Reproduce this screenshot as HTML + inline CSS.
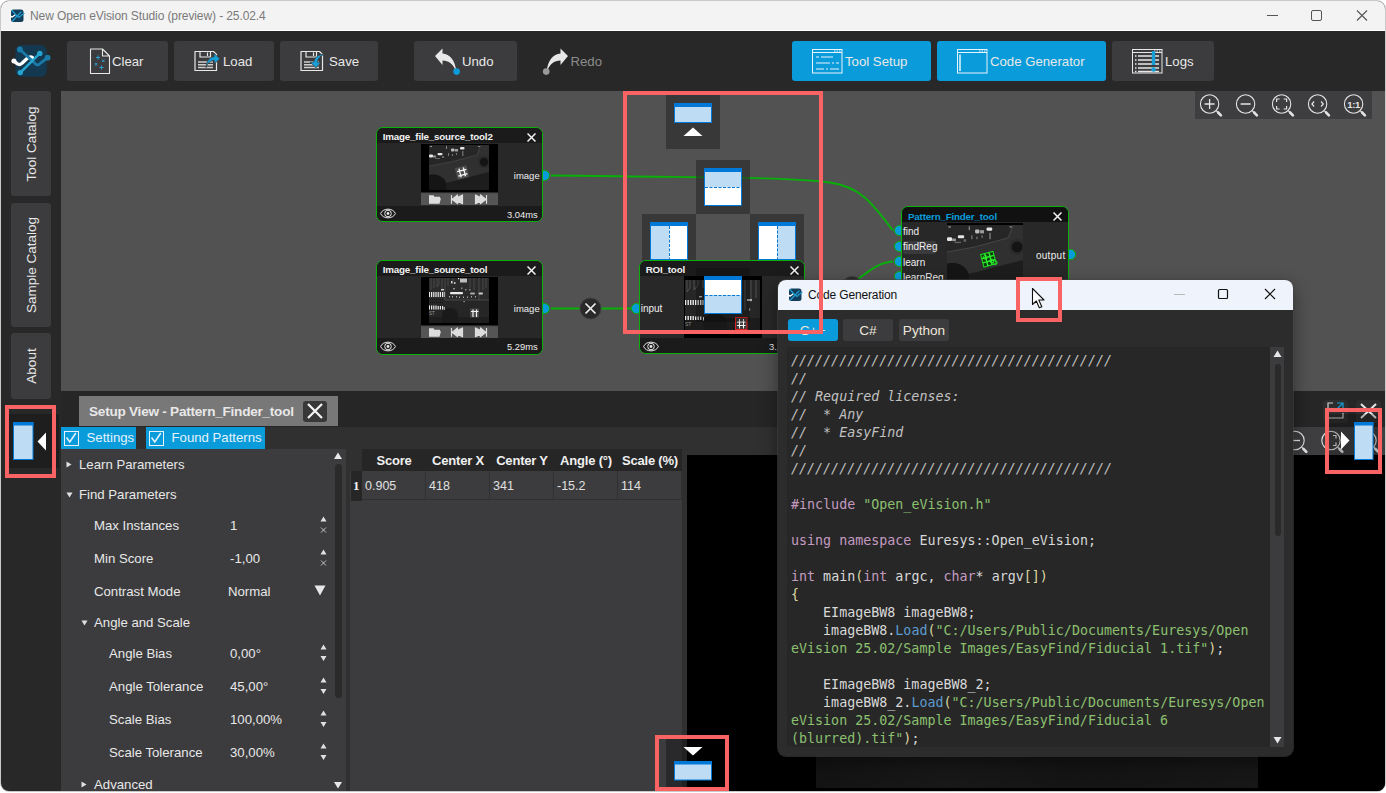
<!DOCTYPE html>
<html lang="en">
<head>
<meta charset="utf-8">
<title>New Open eVision Studio (preview) - 25.02.4</title>
<style>
*{box-sizing:border-box;margin:0;padding:0}
html,body{width:1386px;height:793px;overflow:hidden;background:#fff}
body{font-family:"Liberation Sans",sans-serif;font-size:13px;color:#e6e6e6;position:relative}
.abs,.abs>*{position:absolute}
#win{position:absolute;left:0;top:0;width:1386px;height:792px;border-radius:9px;background:#c9c9c9;overflow:hidden}
#winin{position:absolute;left:1px;top:1px;width:1384px;height:790px;border-radius:8px;background:#282828;overflow:hidden}
#titlebar{position:absolute;left:0;top:0;width:1384px;height:30px;background:#f3f3f3;border-bottom:1px solid #fff}
#title{position:absolute;left:29px;top:8px;font-size:12px;color:#7a7a7a;white-space:nowrap;letter-spacing:-0.1px}
.tbtn{position:absolute;top:40px;height:40px;background:#3c3c3e;border-radius:3px}
.tbtn.on{background:#0a9cda}
.tbtn span,.tlabel{position:absolute;top:13px;font-size:13.2px;color:#e8e8e8;white-space:nowrap}
.vtab{position:absolute;left:10px;width:40px;background:#3c3c3e;border-radius:3px}
.vtab span{position:absolute;left:50%;top:50%;transform:translate(-50%,-50%) rotate(-90deg);white-space:nowrap;font-size:13.5px;color:#e8e8e8}
#canvas{position:absolute;left:60px;top:90px;width:1324px;height:300px;background:#525252;overflow:hidden}
.red{position:absolute;border:4px solid #f96363;z-index:50}

#pg{position:absolute;left:-1px;top:-1px;width:1386px;height:793px}
#pg div,#pg svg{position:absolute}
.node{border:1.5px solid #08b008;border-radius:7px;background:#282828;overflow:hidden}
.node .nt{left:0;top:0;right:0;height:15.3px;background:#1b1b1b}
.node .nt b{position:absolute;left:6px;top:3.4px;font-size:9.8px;letter-spacing:-0.19px;color:#f2f2f2;white-space:nowrap}
.node .nf{left:0;bottom:0;right:0;height:15.5px;background:#1b1b1b}
.node .ms{right:4.5px;bottom:1.5px;font-size:9.4px;color:#eee;letter-spacing:0;white-space:nowrap}
.plabel{font-size:10px;color:#eee;letter-spacing:0;white-space:nowrap;line-height:13px}
.port{width:11px;height:11px;border-radius:50%;background:#0a9cda;border:1.2px solid #08b008}
.guide{background:#3d3d3d}

.bt{font-size:13.2px;color:#e8e8e8;white-space:nowrap;line-height:16px}
.chip{background:#0a9cda;height:22px}
.chip .cb{left:2.500px;top:3.700px;width:15px;height:15px;border:1.600px solid #e8f3fa}
.th{font-weight:bold;font-size:13px;color:#f0f0f0;text-align:center;line-height:23px;height:22px;top:449px;width:64px;background:#262626;white-space:nowrap;letter-spacing:-0.2px}
.td{font-size:12.500px;color:#e0e0e0;line-height:30.5px;height:29px;top:471px;width:64px;padding-left:3px;border-right:1px solid #303032;border-bottom:1px solid #303032}
.spin{font-size:7px;color:#e0e0e0;line-height:8px;width:10px;text-align:center}

#dlgbox{left:778px;top:280px;width:515px;height:476px;border-radius:8px;background:#2c2c2c;overflow:hidden;box-shadow:0 0 0 1px rgba(70,70,70,0.55),0 6px 18px rgba(0,0,0,0.45)}
#dlgbox .dt{left:0;top:0;width:515px;height:30px;background:#eff3fb}
.ltab{top:39px;width:50px;height:22px;border-radius:3px;background:#3c3c3e;text-align:center;font-size:13.600px;line-height:23px;color:#ece6da}
#code{left:13px;top:72px;font-family:"DejaVu Sans Mono","Liberation Mono",monospace;font-size:13.330px;line-height:18px;color:#d8d8d8;white-space:pre}
#code i{color:#c0c0c0;font-style:italic}
#code .k{color:#c49ac0}#code .s{color:#8cc070}#code .f{color:#5c9cd0}#code .p{color:#c49ac0}#code .y{color:#dcd6a0}
</style>
</head>
<body>
<div id="win"><div id="winin">

<!-- ===== title bar ===== -->
<div id="titlebar">
  <svg style="position:absolute;left:8px;top:8px" width="16" height="14" viewBox="0 0 16 14">
    <rect x="2" y="0.5" width="12.5" height="12.5" rx="2.5" fill="#123e5c"/>
    <path d="M0.8 6.2 L3 8.2 L6 6" stroke="#fff" stroke-width="1.3" fill="none" stroke-linecap="round"/>
    <path d="M3 1.5 L7.5 6.5 L10 8.5 L12 6.5 L15 4.5" stroke="#1f9ccf" stroke-width="1.2" fill="none" stroke-linecap="round"/>
    <path d="M3.5 12 L12 3" stroke="#1f9ccf" stroke-width="1.2" fill="none" stroke-linecap="round"/>
  </svg>
  <div id="title">New Open eVision Studio (preview) - 25.02.4</div>
  <svg style="position:absolute;left:1260px;top:6.5px" width="116" height="16" viewBox="0 0 116 16">
    <path d="M6 7.5 H17" stroke="#555" stroke-width="1"/>
    <rect x="50.5" y="2.5" width="10" height="10" rx="1.5" fill="none" stroke="#555" stroke-width="1"/>
    <path d="M96 2.5 L106 12.5 M106 2.5 L96 12.5" stroke="#555" stroke-width="1.1"/>
  </svg>
</div>

<!-- ===== toolbar ===== -->
<div id="toolbar">
  <!-- logo -->
  <svg style="position:absolute;left:9px;top:39px" width="42" height="40" viewBox="10 40 42 40">
    <rect x="15.400" y="45" width="31.400" height="31.800" rx="6" fill="#14384f"/>
    <path d="M13.900 60.900 L17.500 64 C19 65 20.500 64.500 22 63.300 L26.500 59 C28.500 57 30.500 56.500 32.500 57.500" stroke="#fff" stroke-width="3.300" fill="none" stroke-linecap="round" stroke-linejoin="round"/>
    <circle cx="13.900" cy="60.900" r="2.500" fill="#fff"/>
    <path d="M19.900 49.500 L32 60.500 C35 63.500 37 66.500 39.500 64 L47.600 57.700" stroke="#1a7aa8" stroke-width="2.800" fill="none" stroke-linecap="round" stroke-linejoin="round"/>
    <circle cx="19.900" cy="49.500" r="2.900" fill="#1a7aa8"/><circle cx="47.600" cy="57.700" r="2.900" fill="#1a7aa8"/>
    <path d="M20.300 72.600 L39.800 53.400" stroke="#25a4d0" stroke-width="2.600" fill="none" stroke-linecap="round"/>
    <circle cx="20.300" cy="72.600" r="2.700" fill="#25a4d0"/><circle cx="39.800" cy="53.400" r="2.700" fill="#25a4d0"/>
  </svg>

  <div class="tbtn" style="left:66px;width:101px">
    <svg style="position:absolute;left:22px;top:7px" width="22" height="27" viewBox="0 0 22 27">
      <path d="M1.5 1 H13.5 L20.5 8 V25.5 H1.5 Z M13.5 1 V8 H20.5" fill="none" stroke="#e8e8e8" stroke-width="1.1" stroke-linejoin="round"/>
      <g stroke="#2a9fd0" stroke-width="1" fill="none"><path d="M9 7.5v4M7 9.500h4"/><path d="M13 11.500l2.500 2.500M15.500 11.500l-2.500 2.500"/><path d="M6 15l2 2.500M8 15l-2 2.500"/><path d="M12.500 17.500v4M10.500 19.500h4"/></g>
    </svg>
    <span style="left:45px">Clear</span>
  </div>
  <div class="tbtn" style="left:173px;width:100px">
    <svg style="position:absolute;left:20px;top:9px" width="26" height="22" viewBox="0 0 26 22" id="flop1">
      <path d="M1 1.500 H19.500 L22.500 4.500 V20.500 H1 Z" fill="none" stroke="#e8e8e8" stroke-width="1.200" stroke-linejoin="round"/>
      <path d="M6 1.500 V7 H16.500 V1.500 M13.500 2.500 V6" fill="none" stroke="#e8e8e8" stroke-width="1.200"/>
      <path d="M4 12 H19 M4 14.700 H19 M4 17.400 H19" stroke="#cfcfcf" stroke-width="1.500"/>
      <path d="M12 17.800 C12.300 11 15.500 7.200 20 6.800 V3.200 L25.900 8.800 L20.300 13.900 V10.600 C16.500 10.600 13.800 12.600 12 17.800 Z" fill="#169fd6" stroke="#3c3c3e" stroke-width="0.700"/>
    </svg>
    <span style="left:49px">Load</span>
  </div>
  <div class="tbtn" style="left:279px;width:98px">
    <svg style="position:absolute;left:20px;top:9px" width="26" height="22" viewBox="0 0 26 22">
      <path d="M1 1.500 H19.500 L22.500 4.500 V20.500 H1 Z" fill="none" stroke="#e8e8e8" stroke-width="1.200" stroke-linejoin="round"/>
      <path d="M6 1.500 V7 H16.500 V1.500 M13.500 2.500 V6" fill="none" stroke="#e8e8e8" stroke-width="1.200"/>
      <path d="M4 12 H19 M4 14.700 H19 M4 17.400 H19" stroke="#cfcfcf" stroke-width="1.500"/>
      <path d="M25.500 4 C19 4 14.500 7 13.800 12 H10 L16 17.800 L21 12.300 H17.500 C17.800 8.500 20.500 5.500 25.500 4 Z" fill="#169fd6" stroke="#3c3c3e" stroke-width="0.700"/>
    </svg>
    <span style="left:49px">Save</span>
  </div>
  <div class="tbtn" style="left:413px;width:103px">
    <svg style="position:absolute;left:19px;top:5px" width="28" height="32" viewBox="0 0 28 32">
      <path d="M2 10 L9.500 2.500 V7.500 C17 8 22 14 23.500 26 C20 18 16 14.500 9.500 14.500 V19 Z" fill="#e8e8e8"/>
      <circle cx="23.600" cy="25.600" r="3.300" fill="#0a9cda"/>
    </svg>
    <span style="left:48px">Undo</span>
  </div>
  <svg style="position:absolute;left:540px;top:45px" width="30" height="32" viewBox="0 0 30 32">
    <path d="M27 10 L19.500 2.500 V7.500 C12 8 7 14 5.500 26 C9 18 13 14.500 19.500 14.500 V19 Z" fill="#e8e8e8"/>
    <circle cx="5.200" cy="25.600" r="3.300" fill="#9a9a9a"/>
  </svg>
  <div class="tlabel" style="left:569.500px;top:53px;color:#8c8c8c">Redo</div>

  <div class="tbtn on" style="left:791px;width:139px">
    <svg style="position:absolute;left:20px;top:8px" width="31" height="25" viewBox="0 0 31 25">
      <rect x="0.500" y="0.500" width="29.500" height="23.500" fill="none" stroke="#e8f4fb" stroke-width="1"/>
      <path d="M0.500 3.500 H30" stroke="#e8f4fb" stroke-width="1"/>
      <path d="M22 2h1.500M24.500 2h1.500M27 2h1.500" stroke="#e8f4fb" stroke-width="1"/>
      <path d="M4 8h3M9 8h12M4 14h14M20 14h2M24 14h3M4 20h8M14 20h2M18 20h9" stroke="#e8f4fb" stroke-width="1.200"/>
    </svg>
    <span style="left:53px">Tool Setup</span>
  </div>
  <div class="tbtn on" style="left:936px;width:169px">
    <svg style="position:absolute;left:20px;top:8px" width="31" height="25" viewBox="0 0 31 25">
      <rect x="0.500" y="0.500" width="29.500" height="23.500" fill="none" stroke="#e8f4fb" stroke-width="1"/>
      <path d="M0.500 3.500 H30" stroke="#e8f4fb" stroke-width="1"/>
      <path d="M22 2h1.500M24.500 2h1.500M27 2h1.500" stroke="#e8f4fb" stroke-width="1"/>
      <path d="M3 5.500 V22" stroke="#e8f4fb" stroke-width="1.500"/>
    </svg>
    <span style="left:53px">Code Generator</span>
  </div>
  <div class="tbtn" style="left:1111px;width:102px">
    <svg style="position:absolute;left:20px;top:8px" width="31" height="25" viewBox="0 0 31 25">
      <rect x="0.500" y="0.500" width="29.500" height="23.500" fill="none" stroke="#e8e8e8" stroke-width="1"/>
      <path d="M0.500 3.500 H30" stroke="#e8e8e8" stroke-width="1"/>
      <path d="M22 2h1.500M24.500 2h1.500M27 2h1.500" stroke="#e8e8e8" stroke-width="1"/>
      <path d="M3 7h1.500M6 7h21M3 11h1.500M6 11h21M3 15h1.500M6 15h21M3 19h1.500M6 19h21M3 22.500h1.500M6 22.500h21" stroke="#e8e8e8" stroke-width="1.500"/>
      <path d="M21.500 2 V16" stroke="#169fd6" stroke-width="3.400"/><circle cx="21.500" cy="20.500" r="2.300" fill="#169fd6"/>
    </svg>
    <span style="left:53px">Logs</span>
  </div>
</div>

<!-- ===== left vertical tabs ===== -->
<div class="vtab" style="top:90px;height:105px"><span>Tool Catalog</span></div>
<div class="vtab" style="top:202px;height:124px"><span>Sample Catalog</span></div>
<div class="vtab" style="top:332px;height:66px"><span>About</span></div>

<!-- ===== graph canvas ===== -->
<div id="canvas"></div>
<div id="pg">
<!--CANVAS-->
<div class="port" style="left:539.300px;top:170px"></div><div class="port" style="left:539.300px;top:303px"></div><div class="port" style="left:630.500px;top:303px"></div><div class="port" style="left:894px;top:225px"></div><div class="port" style="left:894px;top:240.500px"></div><div class="port" style="left:894px;top:256px"></div><div class="port" style="left:894px;top:271px"></div><div class="port" style="left:1064.500px;top:249px"></div><svg style="left:61px;top:91px" width="1325" height="300" viewBox="61 91 1325 300"><g fill="none" stroke="#08b008" stroke-width="1.900">
<path d="M551 175.500 L620 176.300 C700 177.500 790 177 830 182.500 C862 187 874 206 893 230.500"/>
<path d="M551 308.500 H631"/>
<path d="M806 300 C830 300 845 290 857 280 C870 270 880 262 893 261.500"/>
</g>
<circle cx="590.500" cy="308.500" r="10.500" fill="#2a2a2a" stroke="#3e3e3e" stroke-width="1"/><path d="M585.500 303.500 l10 10 m0 -10 l-10 10" stroke="#f0f0f0" stroke-width="1.700"/>
<circle cx="852" cy="287" r="10.500" fill="#2a2a2a" stroke="#3e3e3e" stroke-width="1"/><path d="M847 282 l10 10 m0 -10 l-10 10" stroke="#f0f0f0" stroke-width="1.700"/>
</svg><div class="node" style="left:375.7px;top:127px;width:167.500px;height:95px"><div class="nt"><b>Image_file_source_tool2</b></div><svg style="left:150px;top:5px" width="9" height="9" viewBox="0 0 9 9"><path d="M0.5 0.5 L8.5 8.5 M8.5 0.5 L0.5 8.5" stroke="#f2f2f2" stroke-width="1.5"/></svg><div style="left:44px;top:15.900px;width:77px;height:48.300px;background:#000"></div><svg style="left:52px;top:17.200px" width="60" height="45" viewBox="0 0 60 45" preserveAspectRatio="none">
<rect width="60" height="45" fill="#1d1d1d"/>
<path d="M0 0 H60 V27 L17 38 C15 32 8 28 0 30 Z" fill="#303030"/>
<path d="M0 0 H52 L48 10 L22 17 L0 21 Z" fill="#262626"/>
<path d="M0 21 L22 17 L48 10 L52 0" fill="none" stroke="#4a4a4a" stroke-width="0.700"/>
<path d="M0 30 C8 28 15 32 17 38 L17 45 H0 Z" fill="#151515"/>
<circle cx="55" cy="17" r="6.200" fill="#2a2a2a"/><circle cx="55" cy="17" r="4.200" fill="#141414"/>
<g transform="rotate(-14 33 27.500)"><rect x="27" y="21.500" width="12" height="12" fill="#4d4d4d"/><path d="M31 23 V32 M35.500 23 V32 M28.500 25.500 H38 M28.500 30 H38" stroke="#f4f4f4" stroke-width="1.300"/></g>
<g fill="#e6e6e6"><rect x="0" y="9.500" width="4" height="3" rx="1"/><rect x="4" y="10.500" width="3" height="2" fill="#9a9a9a"/><rect x="8.500" y="8" width="5" height="2.300" rx="1"/><rect x="22" y="3.500" width="3.500" height="3" rx="1" fill="#bdbdbd"/><rect x="26" y="4" width="3" height="2.500" fill="#9d9d9d"/><rect x="31" y="2" width="4.500" height="2.400" rx="1"/><rect x="1" y="1" width="2" height="1" fill="#999"/><rect x="17" y="1" width="1" height="3" fill="#888"/><rect x="19" y="8" width="1" height="3" fill="#777"/><rect x="23" y="9" width="1" height="2" fill="#777"/><rect x="27" y="8" width="1" height="2" fill="#777"/><rect x="33" y="6" width="1.500" height="5" fill="#666"/><rect x="6" y="13" width="5" height="1" fill="#666"/><rect x="13" y="11" width="2" height="2" fill="#666"/><rect x="49" y="1" width="2" height="1" fill="#888"/></g>
</svg><svg style="left:44px;top:64.9px" width="77" height="12.300" viewBox="0 0 77 12"><rect width="77" height="12" fill="#555"/>
<path d="M8 2.200 H12.500 L13.500 3.500 H19 V5 H20 L18.500 10.500 H8 Z" fill="#dcdcdc"/>
<path d="M30.500 1.800 V10.500 M31 6.200 L36.500 1.800 V4.500 L41.500 1.800 V10.500 L36.500 8 V10.500 Z" fill="#dcdcdc" stroke="#dcdcdc" stroke-width="1.200" stroke-linejoin="round"/>
<path d="M65.500 1.800 V10.500 M65 6.200 L59.500 1.800 V4.500 L54.500 1.800 V10.500 L59.500 8 V10.500 Z" fill="#dcdcdc" stroke="#dcdcdc" stroke-width="1.200" stroke-linejoin="round"/></svg><div class="nf"></div><svg style="left:3.5px;top:80px" width="16" height="11" viewBox="0 0 16 11"><path d="M0.6 5.5 C3 -0.3 13 -0.3 15.400 5.5 C13 11.300 3 11.300 0.6 5.5 Z" fill="none" stroke="#e8e8e8" stroke-width="1"/><circle cx="8" cy="5.5" r="3.3" fill="none" stroke="#e8e8e8" stroke-width="1"/><circle cx="8" cy="5.5" r="1.4" fill="#e8e8e8"/></svg><div class="ms">3.04ms</div><div class="plabel" style="right:2.5px;top:40.8px;font-size:9.5px">image</div></div><div class="node" style="left:375.7px;top:259.800px;width:167.500px;height:95px"><div class="nt"><b>Image_file_source_tool</b></div><svg style="left:150px;top:5px" width="9" height="9" viewBox="0 0 9 9"><path d="M0.5 0.5 L8.5 8.5 M8.5 0.5 L0.5 8.5" stroke="#f2f2f2" stroke-width="1.5"/></svg><div style="left:44px;top:15.900px;width:77px;height:48.300px;background:#000"></div><svg style="left:52px;top:17.200px" width="60" height="45" viewBox="0 0 60 45" preserveAspectRatio="none">
<rect width="60" height="45" fill="#2b2b2b"/>
<rect y="22" width="60" height="23" fill="#262626"/>
<rect y="39" width="60" height="6" fill="#1e1e1e"/>
<path d="M13 45 V37 C13 32 17 30 21 30 C26 30 29 33 29 38 V45 Z" fill="#1a1a1a"/>
<g stroke="#5a5a5a" stroke-width="0.600" fill="none"><path d="M2 0V12M5 0V10M8 0V9L10 6V0M13 0V12M16 0V22M19 0V8M24 0V6M50 0V22M54 0V12M57 0V10M16 22H60M45 0V12M41 0V10"/></g>
<g fill="#eaeaea"><rect x="0" y="14" width="1" height="5"/><rect x="2" y="14" width="1.200" height="5"/><rect x="4.200" y="14" width="1.200" height="5"/><rect x="6.400" y="14" width="1.200" height="5"/><rect x="8.600" y="14" width="1.200" height="5"/><rect x="10.800" y="14" width="1.200" height="5"/><rect x="13" y="14" width="1.200" height="5"/><rect x="14.800" y="14" width="0.800" height="5"/>
<rect x="0" y="27.500" width="1" height="4"/><rect x="2" y="27.500" width="1.200" height="4"/><rect x="4.200" y="27.500" width="1.200" height="4"/><rect x="6.400" y="27.500" width="1.200" height="4"/><rect x="8.600" y="28" width="1.200" height="3.500"/><rect x="10.800" y="28" width="1.200" height="3.500"/><rect x="13" y="28" width="1.200" height="3.500"/><rect x="14.800" y="29" width="0.800" height="3"/>
<rect x="21" y="14" width="13" height="2.200" rx="1"/><rect x="41" y="14.500" width="5" height="2" rx="1" fill="#aaa"/><rect x="49.500" y="14.500" width="4.500" height="2" rx="1" fill="#ccc"/><rect x="31" y="0.500" width="7" height="4" fill="#bdbdbd"/><rect x="29" y="0" width="1.200" height="1.200"/><rect x="22" y="3" width="1.500" height="2.500" fill="#ccc"/><rect x="25" y="4" width="1.500" height="2" fill="#bbb"/><rect x="12" y="11" width="3" height="1.500" fill="#ccc"/><rect x="24" y="10" width="2" height="1.500" fill="#888"/><rect x="32" y="9.500" width="1.500" height="1.500" fill="#888"/><rect x="36" y="11" width="1.500" height="1.500" fill="#888"/><rect x="40" y="11" width="1.500" height="1.500" fill="#888"/>
<rect x="20" y="18" width="1" height="1.500" fill="#aaa"/><rect x="23" y="18" width="1" height="1.500" fill="#aaa"/><rect x="27" y="18" width="1" height="1.500" fill="#aaa"/><rect x="30" y="18.500" width="1" height="1.500" fill="#aaa"/><rect x="34" y="18.500" width="1" height="1.500" fill="#aaa"/><rect x="38" y="18.500" width="1" height="1.500" fill="#aaa"/><rect x="42" y="18" width="1" height="1.500" fill="#aaa"/><rect x="46" y="18" width="1" height="1.500" fill="#aaa"/><rect x="34.500" y="23" width="1.200" height="1.200" fill="#aaa"/></g>
<g fill="#111"><circle cx="1.500" cy="21.500" r="0.600"/><circle cx="3.500" cy="21.500" r="0.600"/><circle cx="5.500" cy="21.500" r="0.600"/><circle cx="7.500" cy="21.500" r="0.600"/><circle cx="9.500" cy="21.500" r="0.600"/><circle cx="11.500" cy="21.500" r="0.600"/><circle cx="13.500" cy="21.500" r="0.600"/><circle cx="1.500" cy="24.500" r="0.600"/><circle cx="3.500" cy="24.500" r="0.600"/><circle cx="5.500" cy="24.500" r="0.600"/><circle cx="7.500" cy="24.500" r="0.600"/><circle cx="9.500" cy="24.500" r="0.600"/><circle cx="11.500" cy="24.500" r="0.600"/><circle cx="13.500" cy="24.500" r="0.600"/></g>
<rect x="41" y="30.500" width="9" height="9" fill="#474747"/><path d="M44 31.500 V39 M47.500 31.500 V39 M42 33.500 H49.500" stroke="#f4f4f4" stroke-width="1.200"/>
<text x="0" y="36.800" font-size="4.500" fill="#9a9a9a" font-family="Liberation Sans,sans-serif">ST</text>
</svg><svg style="left:44px;top:64.9px" width="77" height="12.300" viewBox="0 0 77 12"><rect width="77" height="12" fill="#555"/>
<path d="M8 2.200 H12.500 L13.500 3.500 H19 V5 H20 L18.500 10.500 H8 Z" fill="#dcdcdc"/>
<path d="M30.500 1.800 V10.500 M31 6.200 L36.500 1.800 V4.500 L41.500 1.800 V10.500 L36.500 8 V10.500 Z" fill="#dcdcdc" stroke="#dcdcdc" stroke-width="1.200" stroke-linejoin="round"/>
<path d="M65.500 1.800 V10.500 M65 6.200 L59.500 1.800 V4.500 L54.500 1.800 V10.500 L59.500 8 V10.500 Z" fill="#dcdcdc" stroke="#dcdcdc" stroke-width="1.200" stroke-linejoin="round"/></svg><div class="nf"></div><svg style="left:3.5px;top:80px" width="16" height="11" viewBox="0 0 16 11"><path d="M0.6 5.5 C3 -0.3 13 -0.3 15.400 5.5 C13 11.300 3 11.300 0.6 5.5 Z" fill="none" stroke="#e8e8e8" stroke-width="1"/><circle cx="8" cy="5.5" r="3.3" fill="none" stroke="#e8e8e8" stroke-width="1"/><circle cx="8" cy="5.5" r="1.4" fill="#e8e8e8"/></svg><div class="ms">5.29ms</div><div class="plabel" style="right:2.5px;top:40.8px;font-size:9.5px">image</div></div><div style="left:696px;top:160px;width:54px;height:54px;background:rgba(40,40,40,0.6)"></div><div style="left:642px;top:214px;width:54px;height:54px;background:rgba(40,40,40,0.6)"></div><div style="left:750px;top:214px;width:54px;height:54px;background:rgba(40,40,40,0.6)"></div><div class="node" style="left:638.7px;top:259.800px;width:166.500px;height:94.500px"><div class="nt"><b>ROI_tool</b></div><svg style="left:150px;top:5px" width="9" height="9" viewBox="0 0 9 9"><path d="M0.5 0.5 L8.5 8.5 M8.5 0.5 L0.5 8.5" stroke="#f2f2f2" stroke-width="1.5"/></svg><div style="left:44px;top:15.400px;width:78px;height:63px;background:#000"></div><svg style="left:45px;top:19px" width="75" height="50" viewBox="0 0 75 50" preserveAspectRatio="none">
<rect width="75" height="50" fill="#262626"/><rect y="38" width="75" height="12" fill="#1c1c1c"/>
<path d="M18 50 V42 C18 36 24 34 30 34 C38 34 42 38 42 44 V50 Z" fill="#181818"/>
<g stroke="#5c5c5c" stroke-width="0.800" fill="none"><path d="M2 0V12L5 8V0M9 0V10L13 5V0M18 0V8M60 0V30M66 0V22M71 0V18"/></g>
<g fill="#e8e8e8"><rect x="0" y="20" width="1.200" height="5"/><rect x="2.500" y="20" width="1.400" height="5"/><rect x="5" y="20" width="1.400" height="5"/><rect x="7.500" y="20" width="1.400" height="5"/><rect x="10" y="20" width="1.400" height="5"/><rect x="12.500" y="20" width="1.400" height="5"/><rect x="15" y="20" width="1.400" height="5"/><rect x="17.500" y="20" width="1" height="5"/>
<rect x="0" y="36" width="1.200" height="4"/><rect x="2.500" y="36" width="1.400" height="4"/><rect x="5" y="36" width="1.400" height="4"/><rect x="7.500" y="36" width="1.400" height="4"/><rect x="10" y="36.500" width="1.400" height="3.500"/><rect x="12.500" y="36.500" width="1.400" height="3.500"/><rect x="15" y="36.500" width="1.400" height="3.500"/><rect x="18" y="37" width="1" height="3.500"/>
<rect x="62" y="19" width="5" height="2" fill="#aaa"/><rect x="64" y="28" width="1.200" height="3" fill="#888"/><rect x="14" y="16" width="3" height="1.400" fill="#bbb"/></g>
<text x="0" y="46" font-size="5" fill="#8c8c8c" font-family="Liberation Sans,sans-serif">ST</text>
<rect x="50.500" y="37.500" width="11.500" height="12" fill="#3a3a3a" stroke="#e02020" stroke-width="1"/><path d="M54.500 39 V48.500 M58.500 39 V48.500 M52 42 H60.500 M52 45.500 H60.500" stroke="#f4f4f4" stroke-width="1.100"/>
</svg><div class="nf"></div><svg style="left:3.5px;top:80px" width="16" height="11" viewBox="0 0 16 11"><path d="M0.6 5.5 C3 -0.3 13 -0.3 15.400 5.5 C13 11.300 3 11.300 0.6 5.5 Z" fill="none" stroke="#e8e8e8" stroke-width="1"/><circle cx="8" cy="5.5" r="3.3" fill="none" stroke="#e8e8e8" stroke-width="1"/><circle cx="8" cy="5.5" r="1.4" fill="#e8e8e8"/></svg><div class="ms">3.12ms</div><div class="plabel" style="left:1px;top:41px">input</div></div><div class="node" style="left:901px;top:206.200px;width:167.500px;height:95px"><div class="nt" style="background:#111"><b style="color:#0a9cda">Pattern_Finder_tool</b></div><svg style="left:151px;top:5px" width="9" height="9" viewBox="0 0 9 9"><path d="M0.5 0.5 L8.5 8.5 M8.5 0.5 L0.5 8.5" stroke="#f2f2f2" stroke-width="1.5"/></svg><div style="left:44.500px;top:15.400px;width:76.500px;height:63px;background:#000"></div><svg style="left:44.500px;top:18px" width="76.500" height="58" viewBox="0 0 60 45" preserveAspectRatio="none">
<rect width="60" height="45" fill="#1d1d1d"/>
<path d="M0 0 H60 V27 L17 38 C15 32 8 28 0 30 Z" fill="#303030"/>
<path d="M0 0 H52 L48 10 L22 17 L0 21 Z" fill="#262626"/>
<path d="M0 21 L22 17 L48 10 L52 0" fill="none" stroke="#4a4a4a" stroke-width="0.700"/>
<path d="M0 30 C8 28 15 32 17 38 L17 45 H0 Z" fill="#151515"/>
<circle cx="55" cy="17" r="6.200" fill="#2a2a2a"/><circle cx="55" cy="17" r="4.200" fill="#141414"/>
<g fill="#e6e6e6"><rect x="0" y="9.500" width="4" height="3" rx="1"/><rect x="4" y="10.500" width="3" height="2" fill="#9a9a9a"/><rect x="8.500" y="8" width="5" height="2.300" rx="1"/><rect x="22" y="3.500" width="3.500" height="3" rx="1" fill="#bdbdbd"/><rect x="26" y="4" width="3" height="2.500" fill="#9d9d9d"/><rect x="31" y="2" width="4.500" height="2.400" rx="1"/><rect x="1" y="1" width="2" height="1" fill="#999"/><rect x="17" y="1" width="1" height="3" fill="#888"/><rect x="19" y="8" width="1" height="3" fill="#777"/><rect x="23" y="9" width="1" height="2" fill="#777"/><rect x="27" y="8" width="1" height="2" fill="#777"/><rect x="33" y="6" width="1.500" height="5" fill="#666"/><rect x="6" y="13" width="5" height="1" fill="#666"/><rect x="13" y="11" width="2" height="2" fill="#666"/><rect x="49" y="1" width="2" height="1" fill="#888"/></g>
<g transform="rotate(-15 32.500 26.500)"><rect x="27.500" y="21.500" width="10" height="10" fill="#123a12" stroke="#20e020" stroke-width="0.800"/><path d="M30.800 21.500 V31.500 M34.200 21.500 V31.500 M27.500 24.800 H37.500 M27.500 28.200 H37.500" stroke="#2cf02c" stroke-width="1.100"/><circle cx="30.500" cy="24.500" r="1.500" fill="none" stroke="#2cf02c" stroke-width="0.600"/><circle cx="34.500" cy="28.500" r="1.500" fill="none" stroke="#2cf02c" stroke-width="0.600"/><circle cx="37" cy="30.500" r="1.500" fill="none" stroke="#2cf02c" stroke-width="0.600"/></g>
</svg><div style="left:1px;top:33.500px;width:33px;height:13px;background:#3a3a3c;border-radius:2px"></div><div class="plabel" style="left:1px;top:17.5px">find</div><div class="plabel" style="left:1px;top:33px">findReg</div><div class="plabel" style="left:1px;top:48.5px">learn</div><div class="plabel" style="left:1px;top:63.5px">learnReg</div><div class="plabel" style="right:2px;top:41.500px;letter-spacing:0.3px">output</div></div><svg style="left:1195px;top:91px" width="177" height="28" viewBox="0 0 177 28"><rect width="177" height="28" fill="#3e3e40"/><circle cx="14.6" cy="13" r="9.200" fill="none" stroke="#e4e4e4" stroke-width="1.100"/><path d="M21.2 19.6 L23.1 21.5" stroke="#e4e4e4" stroke-width="1.100"/><path d="M23.1 21.5 L25.9 24.3" stroke="#e4e4e4" stroke-width="2.600" stroke-linecap="round"/><path d="M9.6 13 h10 M14.6 8 v10" stroke="#e4e4e4" stroke-width="1.300"/><circle cx="50.6" cy="13" r="9.200" fill="none" stroke="#e4e4e4" stroke-width="1.100"/><path d="M57.2 19.6 L59.1 21.5" stroke="#e4e4e4" stroke-width="1.100"/><path d="M59.1 21.5 L61.900000000000006 24.3" stroke="#e4e4e4" stroke-width="2.600" stroke-linecap="round"/><path d="M45.6 13 h10" stroke="#e4e4e4" stroke-width="1.300"/><circle cx="86.6" cy="13" r="9.200" fill="none" stroke="#e4e4e4" stroke-width="1.100"/><path d="M93.19999999999999 19.6 L95.1 21.5" stroke="#e4e4e4" stroke-width="1.100"/><path d="M95.1 21.5 L97.89999999999999 24.3" stroke="#e4e4e4" stroke-width="2.600" stroke-linecap="round"/><path d="M81.6 11 v-3 h3 M88.6 8 h3 v3 M91.6 15 v3 h-3 M84.6 18 h-3 v-3" fill="none" stroke="#e4e4e4" stroke-width="1.200"/><circle cx="122.6" cy="13" r="9.200" fill="none" stroke="#e4e4e4" stroke-width="1.100"/><path d="M129.2 19.6 L131.1 21.5" stroke="#e4e4e4" stroke-width="1.100"/><path d="M131.1 21.5 L133.9 24.3" stroke="#e4e4e4" stroke-width="2.600" stroke-linecap="round"/><path d="M119.1 10.5 l-2.200 2.500 l2.200 2.500 M126.1 10.5 l2.200 2.500 l-2.200 2.500" fill="none" stroke="#e4e4e4" stroke-width="1.200"/><circle cx="158.6" cy="13" r="9.200" fill="none" stroke="#e4e4e4" stroke-width="1.100"/><path d="M165.2 19.6 L167.1 21.5" stroke="#e4e4e4" stroke-width="1.100"/><path d="M167.1 21.5 L169.9 24.3" stroke="#e4e4e4" stroke-width="2.600" stroke-linecap="round"/><text x="158.6" y="16.6" font-size="9.500" font-weight="bold" text-anchor="middle" fill="#e4e4e4" font-family="Liberation Sans,sans-serif" letter-spacing="-0.3">1:1</text></svg><svg style="left:704px;top:168px" width="38" height="38" viewBox="0 0 38 38"><rect x="0.500" y="0.500" width="37" height="37" fill="#fff" stroke="#0078d7" stroke-width="1"/><rect x="1" y="4" width="36" height="15" fill="#bfdcf5"/><path d="M1 19.500 H37" stroke="#0078d7" stroke-width="1" stroke-dasharray="3 1.500"/><rect x="0" y="0" width="38" height="4" fill="#0078d7"/></svg><svg style="left:650px;top:222px" width="38" height="38" viewBox="0 0 38 38"><rect x="0.500" y="0.500" width="37" height="37" fill="#fff" stroke="#0078d7" stroke-width="1"/><rect x="1" y="4" width="18" height="33" fill="#bfdcf5"/><path d="M19.500 4 V37" stroke="#0078d7" stroke-width="1" stroke-dasharray="3 1.500"/><rect x="0" y="0" width="38" height="4" fill="#0078d7"/></svg><svg style="left:758px;top:222px" width="38" height="38" viewBox="0 0 38 38"><rect x="0.500" y="0.500" width="37" height="37" fill="#fff" stroke="#0078d7" stroke-width="1"/><rect x="19" y="4" width="18" height="33" fill="#bfdcf5"/><path d="M19.500 4 V37" stroke="#0078d7" stroke-width="1" stroke-dasharray="3 1.500"/><rect x="0" y="0" width="38" height="4" fill="#0078d7"/></svg><div style="left:696px;top:268px;width:54px;height:54px;background:rgba(0,0,0,0.22)"></div><svg style="left:704px;top:276px" width="38" height="38" viewBox="0 0 38 38"><rect x="0.500" y="0.500" width="37" height="37" fill="#fff" stroke="#0078d7" stroke-width="1"/><rect x="1" y="19" width="36" height="18" fill="#bfdcf5"/><path d="M1 19.500 H37" stroke="#0078d7" stroke-width="1" stroke-dasharray="3 1.500"/><rect x="0" y="0" width="38" height="4" fill="#0078d7"/></svg><div style="left:666px;top:95px;width:54px;height:54px;background:rgba(40,40,40,0.6)"></div><svg style="left:674px;top:103px" width="38" height="34" viewBox="0 0 38 34"><rect x="0.500" y="0.500" width="37" height="19" fill="#bfdcf5" stroke="#0078d7"/><rect width="38" height="4" fill="#0078d7"/><path d="M9.500 33 L19 24.500 L28.500 33 Z" fill="#fff"/></svg>
<!--/CANVAS-->
<!--BOTTOM-->
<div style="left:61px;top:391px;width:1325px;height:36px;background:#262626"></div><div style="left:61px;top:427px;width:1325px;height:365px;background:#303030"></div><div style="left:79px;top:396px;width:259px;height:30px;background:#787878"></div><div class="bt" style="left:89px;top:404.0px;font-weight:bold;font-size:13.600px;letter-spacing:-0.250px">Setup View - Pattern_Finder_tool</div><div style="left:303px;top:400.500px;width:24px;height:21px;background:#383838;border-radius:3px"></div><svg style="left:307px;top:403px" width="16" height="16" viewBox="0 0 16 16"><path d="M1 1 L15 15 M15 1 L1 15" stroke="#f4f4f4" stroke-width="2.200"/></svg><div class="chip" style="left:61px;top:427px;width:75px"><div class="cb"></div><svg style="left:4px;top:4.500px" width="12" height="12" viewBox="0 0 12 12"><path d="M1.500 5.500 L4.800 10 L10.800 1" fill="none" stroke="#e8f3fa" stroke-width="1.500"/></svg><div class="bt" style="left:25.500px;top:3px;color:#e4f2fa">Settings</div></div><div class="chip" style="left:146px;top:427px;width:119px"><div class="cb"></div><svg style="left:4px;top:4.500px" width="12" height="12" viewBox="0 0 12 12"><path d="M1.500 5.500 L4.800 10 L10.800 1" fill="none" stroke="#e8f3fa" stroke-width="1.500"/></svg><div class="bt" style="left:25.500px;top:3px;color:#e4f2fa">Found Patterns</div></div><div style="left:61px;top:449px;width:285px;height:343px;background:#3c3c3e"></div><div style="left:334.500px;top:463.500px;width:7px;height:234px;background:#2a2a2a;border-radius:3.500px"></div><svg style="left:333px;top:452px" width="10" height="8" viewBox="0 0 10 8"><path d="M1 7 L5 0.500 L9 7 Z" fill="#e8e8e8"/></svg><svg style="left:333px;top:781px" width="10" height="8" viewBox="0 0 10 8"><path d="M1 1 L5 7.500 L9 1 Z" fill="#e8e8e8"/></svg><svg style="left:66px;top:461px" width="6" height="7" viewBox="0 0 6 7"><path d="M0.500 0.500 L5.500 3.500 L0.500 6.500 Z" fill="#e0e0e0"/></svg><div class="bt" style="left:79px;top:457.0px">Learn Parameters</div><svg style="left:65.5px;top:491.5px" width="7" height="6" viewBox="0 0 7 6"><path d="M0.500 0.500 L6.500 0.500 L3.500 5.500 Z" fill="#e0e0e0"/></svg><div class="bt" style="left:79px;top:487.0px">Find Parameters</div><div class="bt" style="left:94px;top:518.0px">Max Instances</div><div class="bt" style="left:230px;top:518.0px">1</div><svg style="left:320px;top:516.0px" width="7" height="18" viewBox="0 0 7 18"><path d="M0.500 5.500 L3.500 0.500 L6.500 5.500 Z" fill="#e0e0e0"/><path d="M1 11.500 L6 16.500 M6 11.500 L1 16.500" stroke="#d0d0d0" stroke-width="0.900"/></svg><div class="bt" style="left:94px;top:551.0px">Min Score</div><div class="bt" style="left:230px;top:551.0px">-1,00</div><svg style="left:320px;top:549.0px" width="7" height="18" viewBox="0 0 7 18"><path d="M0.500 5.500 L3.500 0.500 L6.500 5.500 Z" fill="#e0e0e0"/><path d="M1 11.500 L6 16.500 M6 11.500 L1 16.500" stroke="#d0d0d0" stroke-width="0.900"/></svg><div class="bt" style="left:94px;top:584.0px">Contrast Mode</div><div class="bt" style="left:228px;top:584.0px">Normal</div><svg style="left:314px;top:585px" width="12" height="11" viewBox="0 0 12 11"><path d="M0.500 0.500 H11.500 L6 10.500 Z" fill="#e8e8e8"/></svg><svg style="left:80.5px;top:619.5px" width="7" height="6" viewBox="0 0 7 6"><path d="M0.500 0.500 L6.500 0.500 L3.500 5.500 Z" fill="#e0e0e0"/></svg><div class="bt" style="left:94px;top:615.0px">Angle and Scale</div><div class="bt" style="left:109px;top:646.0px">Angle Bias</div><div class="bt" style="left:230px;top:646.0px">0,00°</div><svg style="left:320px;top:644.0px" width="7" height="18" viewBox="0 0 7 18"><path d="M0.500 5.500 L3.500 0.500 L6.500 5.500 Z M0.500 12 L3.500 17 L6.500 12 Z" fill="#e0e0e0"/></svg><div class="bt" style="left:109px;top:679.0px">Angle Tolerance</div><div class="bt" style="left:230px;top:679.0px">45,00°</div><svg style="left:320px;top:677.0px" width="7" height="18" viewBox="0 0 7 18"><path d="M0.500 5.500 L3.500 0.500 L6.500 5.500 Z M0.500 12 L3.500 17 L6.500 12 Z" fill="#e0e0e0"/></svg><div class="bt" style="left:109px;top:712.0px">Scale Bias</div><div class="bt" style="left:230px;top:712.0px">100,00%</div><svg style="left:320px;top:710.0px" width="7" height="18" viewBox="0 0 7 18"><path d="M0.500 5.500 L3.500 0.500 L6.500 5.500 Z M0.500 12 L3.500 17 L6.500 12 Z" fill="#e0e0e0"/></svg><div class="bt" style="left:109px;top:745.0px">Scale Tolerance</div><div class="bt" style="left:230px;top:745.0px">30,00%</div><svg style="left:320px;top:743.0px" width="7" height="18" viewBox="0 0 7 18"><path d="M0.500 5.500 L3.500 0.500 L6.500 5.500 Z M0.500 12 L3.500 17 L6.500 12 Z" fill="#e0e0e0"/></svg><svg style="left:81px;top:781px" width="6" height="7" viewBox="0 0 6 7"><path d="M0.500 0.500 L5.500 3.500 L0.500 6.500 Z" fill="#e0e0e0"/></svg><div class="bt" style="left:94px;top:776.5px">Advanced</div><div style="left:350px;top:449px;width:332px;height:343px;background:#3c3c3e"></div><div style="left:350px;top:449px;width:12px;height:22px;background:#303030"></div><div class="th" style="left:362px">Score</div><div class="th" style="left:426px">Center X</div><div class="th" style="left:490px">Center Y</div><div class="th" style="left:554px">Angle (°)</div><div class="th" style="left:618px">Scale (%)</div><div style="left:350.500px;top:471px;width:11.500px;height:29.500px;background:#262626;font-weight:bold;font-size:13px;color:#f0f0f0;line-height:29px;text-align:center;font-family:'Liberation Serif',serif">1</div><div class="td" style="left:362px">0.905</div><div class="td" style="left:426px">418</div><div class="td" style="left:490px">341</div><div class="td" style="left:554px">-15.2</div><div class="td" style="left:618px">114</div><div style="left:686.500px;top:455px;width:700px;height:337px;background:#000"></div><div style="left:815.500px;top:740px;width:442px;height:47.500px;background:linear-gradient(90deg,#131313,#181818 30%,#141414 60%,#171717)"></div><svg style="left:1243px;top:427px" width="143" height="28" viewBox="0 0 143 28"><rect width="143" height="28" fill="#3e3e40"/><circle cx="16" cy="13.5" r="9.200" fill="none" stroke="#e4e4e4" stroke-width="1.100"/><path d="M22.6 20.1 L24.5 22.0" stroke="#e4e4e4" stroke-width="1.100"/><path d="M24.5 22.0 L27.3 24.8" stroke="#e4e4e4" stroke-width="2.600" stroke-linecap="round"/><path d="M11 13.5 h10 M16 8.5 v10" stroke="#e4e4e4" stroke-width="1.300"/><circle cx="52" cy="13.5" r="9.200" fill="none" stroke="#e4e4e4" stroke-width="1.100"/><path d="M58.6 20.1 L60.5 22.0" stroke="#e4e4e4" stroke-width="1.100"/><path d="M60.5 22.0 L63.3 24.8" stroke="#e4e4e4" stroke-width="2.600" stroke-linecap="round"/><path d="M47 13.5 h10" stroke="#e4e4e4" stroke-width="1.300"/><circle cx="88" cy="13.5" r="9.200" fill="none" stroke="#e4e4e4" stroke-width="1.100"/><path d="M94.6 20.1 L96.5 22.0" stroke="#e4e4e4" stroke-width="1.100"/><path d="M96.5 22.0 L99.3 24.8" stroke="#e4e4e4" stroke-width="2.600" stroke-linecap="round"/><path d="M83 11.5 v-3 h3 M90 8.5 h3 v3 M93 15.5 v3 h-3 M86 18.5 h-3 v-3" fill="none" stroke="#e4e4e4" stroke-width="1.200"/><circle cx="124" cy="13.5" r="9.200" fill="none" stroke="#e4e4e4" stroke-width="1.100"/><path d="M130.6 20.1 L132.5 22.0" stroke="#e4e4e4" stroke-width="1.100"/><path d="M132.5 22.0 L135.3 24.8" stroke="#e4e4e4" stroke-width="2.600" stroke-linecap="round"/><path d="M120.5 11.0 l-2.200 2.500 l2.200 2.500 M127.5 11.0 l2.200 2.500 l-2.200 2.500" fill="none" stroke="#e4e4e4" stroke-width="1.200"/></svg>
<!--/BOTTOM-->
<!--DLG-->
<div id="dlgbox"><div class="dt"></div><svg style="left:8.500px;top:7.500px" width="16" height="14" viewBox="0 0 16 14">
    <rect x="2" y="0.5" width="12.5" height="12.5" rx="2.5" fill="#123e5c"/>
    <path d="M0.8 6.2 L3 8.2 L6 6" stroke="#fff" stroke-width="1.3" fill="none" stroke-linecap="round"/>
    <path d="M3 1.5 L7.5 6.5 L10 8.5 L12 6.5 L15 4.5" stroke="#1f9ccf" stroke-width="1.2" fill="none" stroke-linecap="round"/>
    <path d="M3.5 12 L12 3" stroke="#1f9ccf" stroke-width="1.2" fill="none" stroke-linecap="round"/>
  </svg><div style="left:30px;top:7.500px;font-size:12px;color:#111;white-space:nowrap;letter-spacing:-0.150px" id="dtitle" >Code Generation</div><svg style="left:390px;top:6px" width="116" height="16" viewBox="0 0 116 16">
    <path d="M6 8.500 H17" stroke="#b8b8b8" stroke-width="1"/>
    <rect x="50.500" y="3.500" width="9" height="9" rx="1" fill="none" stroke="#111" stroke-width="1.200"/>
    <path d="M97 3 L107 13 M107 3 L97 13" stroke="#111" stroke-width="1.200"/>
  </svg><div class="ltab" style="left:9.500px;background:#0a9cda">C++</div><div class="ltab" style="left:65px">C#</div><div class="ltab" style="left:121px">Python</div><div style="left:9px;top:67px;width:497px;height:400px;background:#272727"></div><div style="left:492px;top:67px;width:14px;height:400px;background:#3c3c3e"></div><div style="left:496.500px;top:83.500px;width:6.500px;height:172px;background:#2a2a2a;border-radius:3px"></div><svg style="left:494.500px;top:70px" width="9" height="8" viewBox="0 0 9 8"><path d="M0.500 7 L4.500 0.500 L8.500 7 Z" fill="#e8e8e8"/></svg><svg style="left:494.500px;top:456px" width="9" height="8" viewBox="0 0 9 8"><path d="M0.500 1 L4.500 7.500 L8.500 1 Z" fill="#e8e8e8"/></svg><div id="code"><i>////////////////////////////////////////</i>
<i>//</i>
<i>// Required licenses:</i>
<i>//  * Any</i>
<i>//  * EasyFind</i>
<i>//</i>
<i>////////////////////////////////////////</i>

<span class="p">#include</span> <span class="s">"Open_eVision.h"</span>

<span class="k">using</span> <span class="k">namespace</span> Euresys::Open_eVision;

<span class="k">int</span> main<span class="y">(</span><span class="k">int</span> argc, <span class="k">char</span>* argv<span class="y">[])</span>
<span class="y">{</span>
    EImageBW8 imageBW8;
    imageBW8.<span class="f">Load</span><span class="y">(</span><span class="s">"C:/Users/Public/Documents/Euresys/Open</span>
<span class="s">eVision 25.02/Sample Images/EasyFind/Fiducial 1.tif"</span><span class="y">)</span>;

    EImageBW8 imageBW8_2;
    imageBW8_2.<span class="f">Load</span><span class="y">(</span><span class="s">"C:/Users/Public/Documents/Euresys/Open</span>
<span class="s">eVision 25.02/Sample Images/EasyFind/Fiducial 6</span>
<span class="s">(blurred).tif"</span><span class="y">)</span>;</div></div><svg style="left:1031px;top:287px" width="16" height="24" viewBox="0 0 16 24"><path d="M1.500 1.500 V17.500 L5.300 14 L8.300 20.800 L10.800 19.700 L7.800 13 H13 Z" fill="#fff" stroke="#111" stroke-width="1.100" stroke-linejoin="round"/></svg>
<!--/DLG-->
<!--RED-->
<div class="red" style="left:623px;top:91px;width:199.500px;height:243px"></div><div class="red" style="left:1015.500px;top:276.500px;width:46.500px;height:45px"></div><div style="left:5px;top:414px;width:54px;height:54px;background:#1e1e1e"></div><svg style="left:13px;top:422px" width="34" height="38" viewBox="0 0 34 38"><rect x="0.500" y="0.500" width="19.500" height="37" fill="#bfdcf5" stroke="#0078d7"/><rect width="20.500" height="3.500" fill="#0078d7"/><path d="M33 10.500 L24.500 19.500 L33 28.500 Z" fill="#fff"/></svg><div class="red" style="left:5px;top:405px;width:51px;height:73px"></div><div style="left:666px;top:739px;width:54px;height:48px;background:rgba(0,0,0,0.3)"></div><svg style="left:674px;top:746px" width="38" height="35" viewBox="0 0 38 35"><rect x="0.500" y="15.500" width="37" height="18.500" fill="#bfdcf5" stroke="#0078d7"/><rect y="15" width="38" height="3.500" fill="#0078d7"/><path d="M9.500 1 L19 9.500 L28.500 1 Z" fill="#fff"/></svg><div class="red" style="left:655px;top:735px;width:74px;height:56px"></div><div style="left:1323px;top:399.500px;width:24.500px;height:23px;background:#2e2e2e;border-radius:4px"></div><svg style="left:1327px;top:402px" width="17" height="17" viewBox="0 0 17 17"><path d="M6 1 H1 V16 H16 V11" fill="none" stroke="#d0d0d0" stroke-width="1.200"/><path d="M7 10 L16 1 M10 1 H16 V7" fill="none" stroke="#169fd6" stroke-width="1.200"/></svg><div style="left:1356px;top:399.500px;width:25px;height:23px;background:#2e2e2e;border-radius:4px"></div><svg style="left:1360px;top:403px" width="17" height="16" viewBox="0 0 17 16"><path d="M1 1 L16 15 M16 1 L1 15" stroke="#e8e8e8" stroke-width="2"/></svg><div style="left:1327px;top:414px;width:54px;height:54px;background:rgba(0,0,0,0.22)"></div><svg style="left:1340px;top:422px" width="34" height="38" viewBox="0 0 34 38"><rect x="14.500" y="0.500" width="18.500" height="37" fill="#bfdcf5" stroke="#0078d7"/><rect x="14" width="19.500" height="3.500" fill="#0078d7"/><path d="M1 9.500 L9.500 18.500 L1 27.500 Z" fill="#fff"/></svg><div class="red" style="left:1325px;top:408px;width:56.500px;height:66px"></div>
<!--/RED-->
</div>

<!-- ===== bottom panel ===== -->


<!-- ===== code dialog ===== -->


</div></div>
</body>
</html>
